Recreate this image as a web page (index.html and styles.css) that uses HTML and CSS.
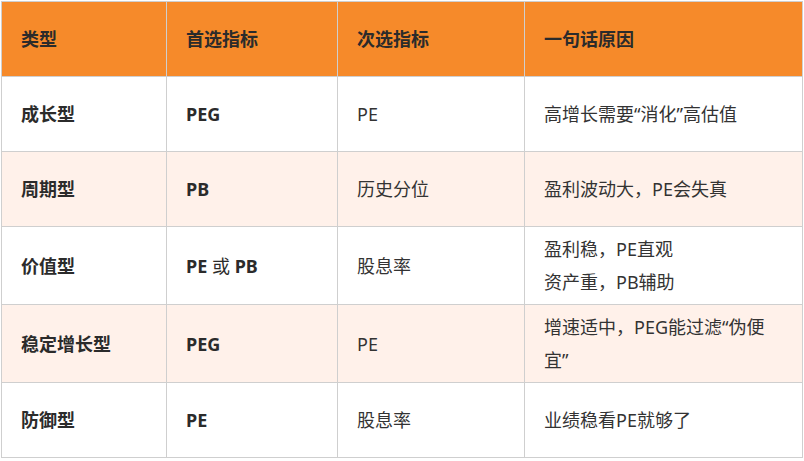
FILE: index.html
```html
<!DOCTYPE html>
<html lang="zh-CN">
<head>
<meta charset="utf-8">
<link rel="stylesheet" href="styles.css">
</head>
<body>
<div class="wrap">
<table class="tbl">
  <colgroup>
    <col class="c1"><col class="c2"><col class="c3"><col class="c4">
  </colgroup>
  <thead>
    <tr><th>类型</th><th>首选指标</th><th>次选指标</th><th>一句话原因</th></tr>
  </thead>
  <tbody>
    <tr><td class="b">成长型</td><td class="b">PEG</td><td>PE</td><td>高增长需要“消化”高估值</td></tr>
    <tr class="alt"><td class="b">周期型</td><td class="b">PB</td><td>历史分位</td><td>盈利波动大，PE会失真</td></tr>
    <tr class="two"><td class="b">价值型</td><td class="b">PE <span class="n">或</span> PB</td><td>股息率</td><td>盈利稳，PE直观<br>资产重，PB辅助</td></tr>
    <tr class="alt two"><td class="b">稳定增长型</td><td class="b">PEG</td><td>PE</td><td>增速适中，PEG能过滤“伪便<br>宜”</td></tr>
    <tr><td class="b">防御型</td><td class="b">PE</td><td>股息率</td><td>业绩稳看PE就够了</td></tr>
  </tbody>
</table>
</div>
</body>
</html>
```
FILE: styles.css
```css
html, body {
  margin: 0;
  padding: 0;
  background: #ffffff;
}
.wrap {
  padding: 1px 0 0 1px;
}
.tbl {
  border-collapse: collapse;
  table-layout: fixed;
  width: 801px;
  font-family: "Noto Sans", "Noto Sans CJK SC", sans-serif;
  font-size: 18px;
  color: #333333;
}
.c1 { width: 165px; }
.c2 { width: 171px; }
.c3 { width: 187px; }
.c4 { width: 278px; }
.tbl th,
.tbl td {
  border: 1px solid #cfcfcf;
  padding: 5px 19px;
  text-align: left;
  vertical-align: middle;
  line-height: 33px;
  height: 64px;
}
.tbl th {
  background: #f68a2a;
  font-weight: 700;
  color: #2b2b2b;
}
.tbl tr.alt td {
  background: #fff1ea;
}
.tbl td.b {
  font-weight: 700;
  color: #2b2b2b;
}
.tbl td .n {
  font-weight: 400;
}
.tbl tr.two td {
  padding-top: 6px;
  padding-bottom: 5px;
}
```
